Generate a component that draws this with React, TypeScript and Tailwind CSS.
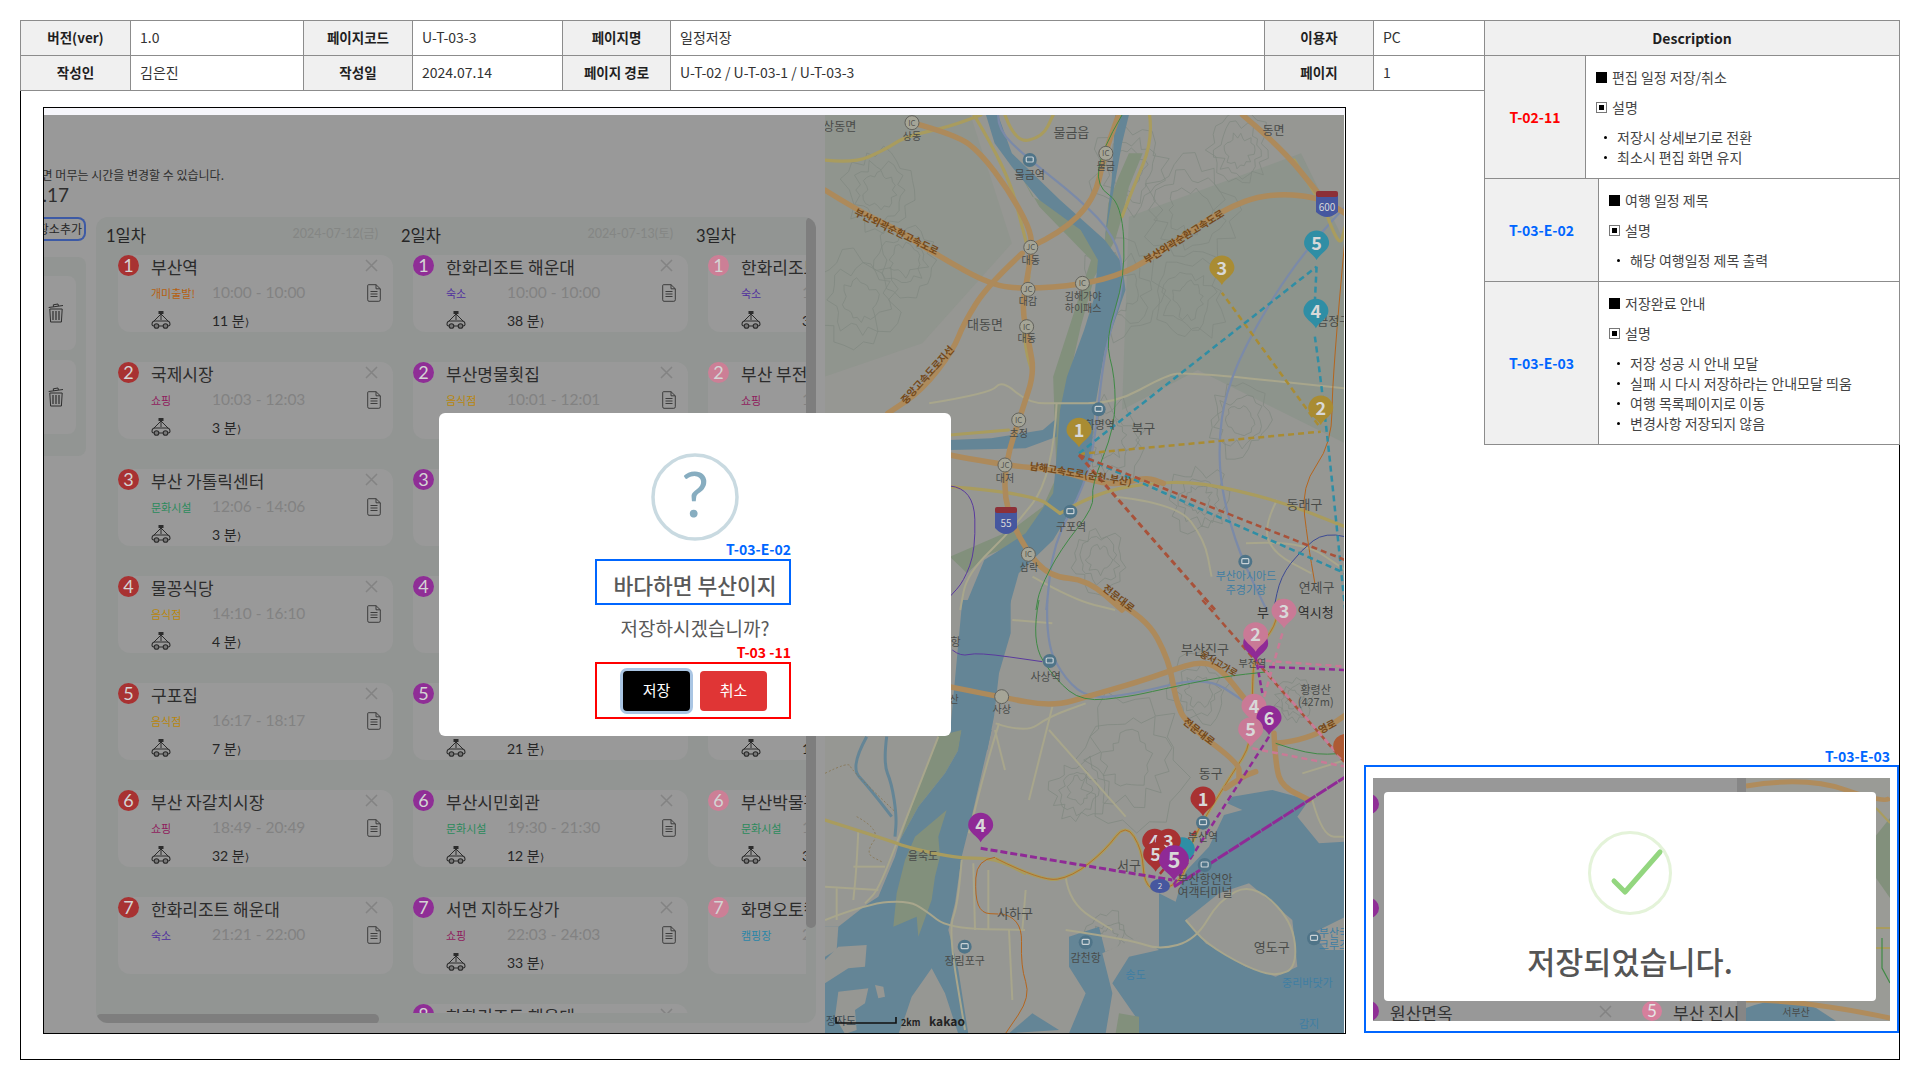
import React from "react";

// map helpers: the points were read off three crops of the reference
type Z = 6 | 7 | 8;
const pt = (z: Z, x: number, y: number): [number, number] =>
  z === 6 ? [820 + x / 2.904, 110 + y / 3] : z === 7 ? [900 + x / 3, 600 + y / 3] : [826 + x / 3, 730 + y / 3];

const parse = (z: Z, s: string) => {
  const n = s.trim().split(/[\s,]+/).map(Number);
  const out: [number, number][] = [];
  for (let i = 0; i < n.length; i += 2) out.push(pt(z, n[i], n[i + 1]));
  return out;
};

const smooth = (z: Z, s: string) => {
  const p = parse(z, s);
  let d = `M${p[0][0]} ${p[0][1]}`;
  for (let i = 1; i < p.length - 1; i++) {
    const mx = (p[i][0] + p[i + 1][0]) / 2;
    const my = (p[i][1] + p[i + 1][1]) / 2;
    d += ` Q${p[i][0]} ${p[i][1]} ${mx} ${my}`;
  }
  const l = p[p.length - 1];
  return d + ` L${l[0]} ${l[1]}`;
};

const poly = (z: Z, s: string) =>
  parse(z, s)
    .map((q, i) => `${i ? "L" : "M"}${q[0]} ${q[1]}`)
    .join(" ") + "Z";

const contourPaths = () => {
  const centres = [
    [880, 190, 34], [905, 260, 30], [860, 300, 40], [1130, 170, 36], [1190, 210, 44], [1240, 150, 30],
    [1120, 290, 40], [1190, 300, 34], [1240, 420, 30], [1110, 440, 36], [1200, 500, 28], [1100, 560, 26],
    [1130, 760, 54], [1080, 790, 26], [1200, 690, 30], [1270, 920, 32], [1110, 940, 22], [1295, 700, 18],
  ];
  let seed = 7;
  const rnd = () => ((seed = (seed * 16807) % 2147483647) % 1000) / 1000;
  const out: string[] = [];
  centres.forEach(([cx, cy, r]) => {
    [1, 0.72, 0.45].forEach((f) => {
      let d = "";
      for (let i = 0; i < 26; i++) {
        const a = (i / 26) * Math.PI * 2;
        const w = r * f * (0.72 + rnd() * 0.5);
        d += `${i ? "L" : "M"}${(cx + Math.cos(a) * w).toFixed(1)} ${(cy + Math.sin(a) * w * 1.15).toFixed(1)} `;
      }
      out.push(d + "Z");
    });
  });
  return out;
};

const motorways: [Z, string][] = [
  [6, "17 240 110 300 230 360 350 440 500 525 600 537 760 525 890 490 1000 420 1170 300 1300 250 1450 260 1528 310"],
  [6, "270 38 400 75 470 130 550 240 610 350 620 410 600 530 590 600 610 700 625 790 590 900 540 1060 540 1190 600 1320 670 1400 780 1410 880 1500"],
  [6, "615 410 700 370 800 270 830 130 870 15"],
  [6, "590 430 490 525 420 640 390 720 300 840 200 910"],
  [6, "380 1035 530 1065 700 1080 850 1130 950 1100 1000 1120"],
  [6, "1230 15 1340 110 1450 250"],
  [7, "640 0 740 50 810 180 830 300 860 370 1020 490 1020 530"],
  [7, "150 260 300 290 460 320 580 285 720 245 820 210 900 185 960 200 1040 300"],
  [7, "1125 400 1130 500 1150 560 1230 600"],
  [7, "1130 430 1230 420 1340 345"],
  [7, "980 565 1030 530 1070 515"],
];
const yellows: [Z, string][] = [
  [6, "17 150 100 160 190 120 250 80 380 50 470 15"],
  [6, "450 15 500 100 560 230 590 350 605 410"],
  [6, "610 500 590 600 600 720 620 790"],
  [6, "540 15 570 100 650 80 680 15"],
  [6, "960 15 970 90 910 240 880 320"],
  [6, "380 975 550 960"],
  [6, "380 1130 620 1150 700 1210"],
  [6, "700 1210 800 1150 950 1120 1100 1115 1330 1170 1528 1250"],
  [6, "1380 150 1440 250"],
  [6, "1470 300 1510 420 1528 350"],
  [8, "0 270 190 330 240 350 350 375 420 385 510 385 600 430"],
  [7, "290 775 430 845 520 830 620 750 680 670 730 750 735 850 780 880 860 830 870 730 1000 520 1060 430 1060 230 1070 150 1130 80 1140 0"],
];
const minors: [Z, string][] = [
  [6, "320 880 500 850 530 810 610 880 700 880 860 880 1000 800 1060 785 1528 835"],
  [6, "1330 1170 1290 1250 1320 1330 1430 1390"],
  [6, "1240 1300 1400 1290 1528 1380"],
  [6, "690 880 680 1100 560 1260 430 1390 410 1500"],
  [6, "860 1160 1040 1180 1120 1290 1140 1400"],
  [6, "620 1400 740 1470 860 1500"],
  [7, "450 390 680 650"],
  [7, "290 370 380 400 450 350 560 310"],
  [8, "0 570 130 520 250 512 300 540 370 595 600 600"],
  [8, "340 20 230 300 160 480 120 520"],
  [8, "100 300 95 410 85 510"],
  [8, "0 470 160 480"],
  [8, "85 410 180 410"],
  [8, "410 390 400 520 370 600 420 900"],
  [8, "35 475 35 570"],
  [8, "450 600 445 400"],
  [8, "490 600 490 420"],
  [8, "510 0 540 120"],
  [7, "500 990 700 1020 780 1050 890 1020 960 900 1060 850 1180 960 1195 1100 1130 1130 1040 1100 920 1030 860 960"],
  [7, "330 990 340 1200"],
  [7, "500 830 510 910 640 990"],
  [7, "380 870 370 990"],
  [7, "340 60 460 70"],
  [7, "300 370 260 500 210 700"],
  [7, "460 320 390 600"],
  [7, "1210 520 1340 480"],
  [7, "1240 600 1270 710 1340 710"],
];
const rails: [Z, string][] = [
  [6, "520 15 520 60 600 140 760 270 860 380 890 510 840 680 820 800 800 1000 770 1130 680 1300 660 1500"],
  [6, "1528 290 1400 430 1250 680 1180 850 1160 1000 1170 1150 1220 1330 1300 1500"],
  [7, "445 0 440 130 500 240 570 295 690 285 920 228 1030 300"],
];
const thinLines: [Z, string, string][] = [
  [6, "880 15 820 120 805 230 880 280 890 500 830 690 860 800 860 950 790 1130 800 1190 700 1320 640 1440 630 1500", "#3f8a45"],
  [6, "380 1128 450 1135 455 1320 420 1415 380 1460", "#5a3a9e"],
  [6, "1528 1280 1470 1265 1400 1320 1340 1400 1320 1500", "#3c4a94"],
  [6, "1528 380 1490 800 1490 1000 1400 1130 1420 1300 1440 1420", "#b5651d"],
  [7, "420 0 395 125 470 240 550 305 690 290 780 270 970 230 1110 215", "#3f8a45"],
  [7, "1130 430 1230 465 1340 460", "#3f8a45"],
  [7, "160 150 185 170 235 157 430 185", "#5a3a9e"],
  [8, "510 382 455 388 450 500 470 550 520 552", "#b5651d"],
  [7, "300 940 370 950 365 1100 395 1190 320 1300", "#b5651d"],
];
const routes: [Z, string, string, number, string][] = [
  [6, "755 1032 1457 965", "#a98c33", 2.5, "6 4"],
  [6, "1450 945 1170 548", "#a98c33", 2.5, "6 4"],
  [6, "755 1030 1445 470", "#2f8ea5", 2.5, "6 4"],
  [6, "1445 470 1440 575", "#2f8ea5", 2.5, "6 4"],
  [6, "1440 680 1465 860 1528 1500", "#2f8ea5", 2.5, "6 4"],
  [6, "755 1035 1528 1390", "#2f8ea5", 2.5, "6 4"],
  [6, "755 1035 1528 1350", "#a8523a", 2.5, "6 4"],
  [6, "755 1035 1150 1500", "#a8523a", 3, "6 4"],
  [7, "910 0 1340 490", "#a8523a", 2.5, "6 4"],
  [7, "1150 100 1095 290 1055 440", "#c97a96", 2.5, "6 4"],
  [7, "1070 180 1340 200", "#c97a96", 2.5, "6 4"],
  [7, "1080 190 1340 490", "#c97a96", 2.5, "6 4"],
  [7, "1060 445 1340 500", "#c97a96", 2.5, "6 4"],
  [7, "910 670 780 825", "#a83232", 2.5, "6 4"],
  [7, "1070 170 1090 280", "#8f2a96", 2.5, "5 3"],
  [7, "1080 200 1340 210", "#8f2a96", 2.5, "6 4"],
  [7, "1110 410 820 860", "#8f2a96", 2.5, "6 4"],
  [7, "245 745 820 840", "#8f2a96", 3, "7 3"],
  [7, "825 860 1340 530", "#8f2a96", 3, "12 1"],
];
const labels: [Z, number, number, string, number, string?][] = [
  [6, 60, 50, "상동면", 12], [6, 270, 78, "상동", 10], [6, 733, 65, "물금읍", 13], [6, 612, 195, "물금역", 11],
  [6, 833, 170, "물금", 10], [6, 1320, 60, "동면", 12], [6, 615, 452, "대동", 10], [6, 607, 575, "대감", 10],
  [6, 767, 560, "김해가야", 10], [6, 767, 595, "하이패스", 10], [6, 482, 643, "대동면", 13], [6, 603, 686, "대동", 10],
  [6, 580, 970, "초정", 10], [6, 540, 1105, "대저", 10], [6, 815, 945, "화명역", 11], [6, 942, 953, "북구", 13],
  [6, 732, 1250, "구포역", 11], [6, 610, 1372, "삼락", 10], [6, 1410, 1183, "동래구", 13], [6, 1495, 635, "금정구", 12],
  [6, 1445, 1430, "연제구", 13], [6, 1240, 1398, "부산아시아드", 11, "#3f7ea3"], [6, 1240, 1438, "주경기장", 11, "#3f7ea3"],
  [7, 918, 148, "부산진구", 13], [7, 1060, 190, "부전역", 10], [7, 1092, 35, "부", 13, "#2f2f2f"], [7, 1250, 35, "역시청", 13, "#2f2f2f"],
  [7, 1250, 268, "황령산", 11], [7, 1250, 305, "(427m)", 11], [7, 440, 230, "사상역", 11], [7, 308, 328, "사상", 10],
  [7, 935, 518, "동구", 13], [7, 690, 795, "서구", 13], [7, 912, 710, "부산역", 11], [7, 918, 838, "부산항연안", 12],
  [7, 918, 876, "여객터미널", 12], [7, 72, 768, "을숙도", 11], [7, 348, 940, "사하구", 13], [7, 197, 1083, "장림포구", 11],
  [7, 560, 1072, "감천항", 11], [7, 710, 1125, "송도", 11, "#3f7ea3"], [7, 1118, 1040, "영도구", 13], [7, 1305, 998, "부산국", 11, "#3f7ea3"],
  [7, 1305, 1035, "크루즈", 11, "#3f7ea3"], [7, 1225, 1147, "중리바닷가", 11, "#3f7ea3"], [7, 1230, 1272, "감지", 11, "#3f7ea3"],
  [7, 170, 125, "항", 11], [7, 165, 298, "산", 10],
];
const roadLabels: [Z, number, number, string, number, number][] = [
  [6, 225, 365, "부산외곽순환고속도로", 10, 26], [6, 1060, 380, "부산외곽순환고속도로", 10, -32],
  [6, 315, 795, "중앙고속도로지선", 10, -48], [6, 760, 1092, "남해고속도로(순천-부산)", 10, 9],
  [6, 870, 1465, "전문대로", 10, 38], [7, 900, 395, "전문대로", 10, 38], [7, 960, 190, "동서고가로", 9, 30], [7, 1285, 380, "영로", 10, -28],
];
const icSigns: [Z, number, number, string][] = [
  [6, 270, 38, "IC"], [6, 833, 130, "IC"], [6, 615, 412, "JC"], [6, 607, 538, "JC"], [6, 765, 520, "IC"],
  [6, 603, 650, "IC"], [6, 580, 930, "IC"], [6, 540, 1065, "JC"], [6, 608, 1333, "IC"], [7, 308, 290, ""],
];
const stations: [Z, number, number][] = [
  [6, 612, 150], [6, 812, 898], [6, 730, 1205], [6, 1238, 1355], [7, 452, 183], [7, 912, 668], [7, 917, 795],
  [7, 197, 1040], [7, 560, 1027], [7, 1245, 1015],
];
const pins: [Z, number, number, string, string, number?][] = [
  [6, 1170, 525, "#a98c33", "3"], [6, 1457, 945, "#a98c33", "2"], [6, 755, 1012, "#a98c33", "1"],
  [6, 1443, 655, "#2f8ea5", "4"], [6, 1445, 450, "#2f8ea5", "5"],
  [7, 850, 800, "#2f8ea5", ""],
  [7, 1070, 182, "#8f2a96", ""], [7, 1070, 155, "#c97a96", "2"], [7, 1155, 85, "#c97a96", "3"],
  [7, 1065, 370, "#c97a96", "4"], [7, 1110, 405, "#8f2a96", "6"], [7, 1055, 440, "#c97a96", "5"],
  [7, 1340, 490, "#ad5a34", ""],
  [7, 912, 648, "#a83232", "1"], [7, 767, 775, "#a83232", "4"], [7, 808, 775, "#a83232", "3"],
  [7, 770, 815, "#a83232", "5"], [7, 245, 727, "#8f2a96", "4"], [7, 825, 842, "#8f2a96", "5", 1.2],
];

function Pin({ z, x, y, color, n, scale = 1 }: { z: Z; x: number; y: number; color: string; n: string; scale?: number }) {
  const [px, py] = pt(z, x, y);
  return (
    <g transform={`translate(${px} ${py}) scale(${scale})`}>
      <path d="M0 0 C-3 -6 -12.5 -10 -12.5 -17 A12.5 12.5 0 1 1 12.5 -17 C12.5 -10 3 -6 0 0Z" fill={color} />
      <text x="0" y="-10.5" textAnchor="middle" fontSize="18" fontWeight="700" fill="#d8d8d8">
        {n}
      </text>
    </g>
  );
}

const land = "#969793";
const water = "#648596";
const marsh = "#82907c";

function MapView() {
  return (
    <svg viewBox="826 115 519 918" className="h-[918px] w-[519px] block shrink-0">
      <rect x="826" y="115" width="519" height="918" fill={land} />
      <path d={poly(6, "17 15 440 15 560 400 300 700 17 800")} fill="#90958e" />
      <path d={poly(6, "900 320 1400 130 1528 400 1528 1000 1100 780 880 900")} fill="#8d948c" />
      {contourPaths().map((d, i) => (
        <path key={i} d={d} fill="none" stroke="#828981" strokeWidth="0.8" />
      ))}
      <path d={poly(6, "545 120 620 260 700 300 830 395 840 280 870 200 900 130 940 130 900 230 880 320 860 390 800 500 760 650 710 880 700 1100 760 1100 730 1200 640 1270 480 1340 430 1390 380 1340 560 1260 650 1190 690 1100 680 800 790 450 640 290")} fill={marsh} />
      <path d={poly(6, "485 15 510 100 560 170 640 270 760 360 810 450 800 560 770 660 720 800 700 900 690 1040 680 1150 600 1270 480 1350 420 1500 550 1500 580 1390 680 1290 750 1170 790 1050 800 900 830 720 890 540 880 460 830 390 700 270 560 130 520 15")} fill={water} />
      <path d={poly(6, "860 15 900 15 880 100 840 330 830 390 850 210")} fill={water} />
      <path d={poly(6, "380 990 500 985 650 960 690 925 690 980 600 1015 380 1020")} fill={water} />
      <path d={poly(7, "190 0 335 0 335 100 300 220 285 350 265 450 140 450 153 400")} fill={water} />

      {/* lower Nakdong delta */}
      <path d={poly(8, "340 18 410 0 400 60 360 130 280 230 225 330 270 200")} fill={marsh} />
      <path d={poly(8, "410 0 500 0 470 130 440 260 410 380 390 520 370 600 400 720 430 912 0 912 0 590 40 590 130 520 160 500 210 380 225 330 280 230 360 130 400 60")} fill={water} />
      <path d={smooth(8, "125 20 75 110 130 170 200 260")} fill="none" stroke={water} strokeWidth="3" />
      <path d={smooth(8, "185 20 175 100 200 160 215 260 210 320")} fill="none" stroke={water} strokeWidth="3" />
      <path d={poly(8, "365 240 340 320 345 380 330 440 320 510 280 620 275 560 205 590 215 490 240 390 270 320")} fill={marsh} />
      <path d={poly(8, "0 590 40 590 35 660 0 680")} fill={land} />
      <path d={poly(8, "40 650 125 645 120 710 70 715 0 760 0 690")} fill={land} />
      <path d={poly(8, "40 785 130 775 120 820 90 840 95 900 60 912 30 860")} fill={land} />
      <path d={poly(8, "150 765 175 770 180 800 160 805")} fill={land} />
      <path d={poly(8, "320 715 360 790 400 912 220 912 240 860 260 800")} fill={land} />

      <path d={poly(7, "780 880 830 905 855 820 930 740 975 645 1030 630 985 610 1000 590 1120 570 1230 600 1195 650 1260 730 1340 725 1340 1300 510 1300 560 1180 510 1100 510 1010 600 980 620 1060 780 1040")} fill={water} />
      <path d={poly(7, "610 1060 720 1010 780 1050 690 1070 640 1150 710 1250 720 1300 620 1300 640 1180")} fill={land} />
      <path d={poly(7, "860 960 960 880 1050 850 1180 960 1195 1100 1130 1130 1040 1100 920 1030")} fill={land} />
      <path d={poly(7, "1240 1000 1340 950 1340 1050 1280 1050")} fill={land} />
      <path d={poly(7, "330 1300 400 1240 480 1290")} fill={water} />
      <path d={poly(7, "660 1240 720 1250 720 1300 650 1300")} fill={marsh} />

      <path d={smooth(8, "0 130 70 95 80 120 210 245")} fill="none" stroke="#86734f" strokeWidth="0.8" strokeDasharray="2 2" />
      <path d={smooth(8, "95 260 170 300 120 370 170 395")} fill="none" stroke="#86734f" strokeWidth="0.8" strokeDasharray="2 2" />
      {minors.map(([z, s], i) => (
        <path key={i} d={smooth(z, s)} fill="none" stroke="#a8a68c" strokeWidth="2" />
      ))}
      {rails.map(([z, s], i) => (
        <path key={i} d={smooth(z, s)} fill="none" stroke="#7b8aa8" strokeWidth="2.2" />
      ))}
      {yellows.map(([z, s], i) => (
        <path key={i} d={smooth(z, s)} fill="none" stroke="#a99c5e" strokeWidth="3.2" strokeLinecap="round" />
      ))}
      <path d={smooth(7, yellows[11][1])} fill="none" stroke="#b5651d" strokeWidth="0.8" />
      {motorways.map(([z, s], i) => (
        <path key={i} d={smooth(z, s)} fill="none" stroke="#ad8a5b" strokeWidth="5.5" strokeLinecap="round" />
      ))}
      {thinLines.map(([z, s, c], i) => (
        <path key={i} d={smooth(z, s)} fill="none" stroke={c} strokeWidth="1" />
      ))}
      {routes.map(([z, s, c, w, dash], i) => (
        <path key={i} d={smooth(z, s)} fill="none" stroke={c} strokeWidth={w} strokeDasharray={dash} />
      ))}

      {icSigns.map(([z, x, y, t], i) => {
        const [px, py] = pt(z, x, y);
        return (
          <g key={i}>
            <circle cx={px} cy={py} r="7" fill="#a5a597" stroke="#62625c" strokeWidth="1" />
            <text x={px} y={py + 3} textAnchor="middle" fontSize="8" fill="#55554f">
              {t}
            </text>
          </g>
        );
      })}
      {stations.map(([z, x, y], i) => {
        const [px, py] = pt(z, x, y);
        return (
          <g key={i}>
            <circle cx={px} cy={py} r="7" fill="#4f7488" />
            <rect x={px - 3.5} y={py - 3} width="7" height="5" rx="1" fill="none" stroke="#c9d2d6" strokeWidth="1.2" />
          </g>
        );
      })}
      {labels.map(([z, x, y, t, s, c], i) => {
        const [px, py] = pt(z, x, y);
        return (
          <text key={i} x={px} y={py + s * 0.38} textAnchor="middle" fontSize={s} fill={c || "#494b49"}>
            {t}
          </text>
        );
      })}
      {roadLabels.map(([z, x, y, t, s, r], i) => {
        const [px, py] = pt(z, x, y);
        return (
          <text key={i} x={px} y={py + 3.5} textAnchor="middle" fontSize={s} fontWeight="700" fill="#74491a" transform={`rotate(${r} ${px} ${py})`}>
            {t}
          </text>
        );
      })}

      <g>
        <path d="M1317 194 H1339 V212 Q1328 222 1317 212Z" fill="#46579f" />
        <rect x="1317" y="191" width="22" height="6" rx="2" fill="#8c3038" />
        <text x="1328" y="211" textAnchor="middle" fontSize="10" fill="#d8d8d8">600</text>
        <path d="M996 510 H1018 V528 Q1007 540 996 528Z" fill="#46579f" />
        <rect x="996" y="507" width="22" height="6" rx="2" fill="#8c3038" />
        <text x="1007" y="527" textAnchor="middle" fontSize="10" fill="#d8d8d8">55</text>
        <ellipse cx="1161" cy="886" rx="10" ry="7" fill="#46579f" />
        <text x="1161" y="889" textAnchor="middle" fontSize="8" fill="#d8d8d8">2</text>
      </g>
      {pins.map(([z, x, y, c, n, s], i) => (
        <Pin key={i} z={z} x={x} y={y} color={c} n={n} scale={s || 1} />
      ))}
      <text x="842" y="1025" textAnchor="middle" fontSize="11" fill="#3a4a54">정자도</text>
      <path d="M837 1017 V1023 H897 V1017" fill="none" stroke="#111" strokeWidth="1.6" />
      <text x="902" y="1026" fontSize="9" fontWeight="700" fill="#222">2km</text>
      <text x="930" y="1026" fontSize="12" fontWeight="700" fill="#222">kakao</text>
    </svg>
  );
}

function CarIcon() {
  return (
    <svg viewBox="0 0 20 18" className="w-5 h-[18px] text-[#2c2c2c]" fill="none" stroke="currentColor">
      <rect x="8" y="0.5" width="4" height="2" fill="currentColor" />
      <path d="M10 2.5 V9 M10 3 L3 10 M10 3 L17 10" strokeWidth="1" />
      <path d="M1 13.5 Q1 10 4 10 H16 Q19 10 19 13.5 Q19 15 17 15 H3 Q1 15 1 13.5Z" strokeWidth="1.1" />
      <circle cx="5.5" cy="15" r="2.3" fill="#777" strokeWidth="1.1" />
      <circle cx="14.5" cy="15" r="2.3" fill="#777" strokeWidth="1.1" />
    </svg>
  );
}

function DocIcon() {
  return (
    <svg viewBox="0 0 14 18" className="w-3.5 h-[18px] text-[#3d3d3d]" fill="none" stroke="currentColor" strokeWidth="1">
      <path d="M1.5 0.7 H9 L13.3 4.8 V15.8 Q13.3 17.3 11.8 17.3 H2 Q0.7 17.3 0.7 15.8 V1.5 Q0.7 0.7 1.5 0.7Z M9 0.7 V4.8 H13.3" />
      <path d="M3.5 7.5 H10.5 M3.5 10 H10.5 M3.5 12.5 H10.5" strokeWidth="1.1" />
    </svg>
  );
}

function CloseIcon() {
  return (
    <svg viewBox="0 0 13 13" className="w-[13px] h-[13px] text-[#838383]" fill="none" stroke="currentColor" strokeWidth="1.5">
      <path d="M1 1 L12 12 M12 1 L1 12" />
    </svg>
  );
}

function TrashIcon() {
  return (
    <svg viewBox="0 0 16 20" className="w-4 h-5 text-[#2f2f2f]" fill="none" stroke="currentColor" strokeWidth="1">
      <path d="M0.7 4.5 L15 2.5 M5.5 3.8 L5.3 1.8 L10 1 L10.4 3" />
      <path d="M1.8 6 H14.2 L13.4 19 H2.6Z" />
      <path d="M5 8 V17 M8 8 V17 M11 8 V17" strokeWidth="1.2" />
    </svg>
  );
}

type Item = { title: string; cat: string; catClass: string; time: string; travel?: string };

const stay = "text-[#4f2f9e]";
const food = "text-[#b8860b]";
const shop = "text-[#8f1e5e]";
const culture = "text-[#2b8a5c]";

const days: { name: string; date: string; badge: string; items: Item[] }[] = [
  {
    name: "1일차",
    date: "2024-07-12(금)",
    badge: "bg-[#a83232]",
    items: [
      { title: "부산역", cat: "개미출발!", catClass: "text-[#b5600f]", time: "10:00 - 10:00", travel: "11 분" },
      { title: "국제시장", cat: "쇼핑", catClass: shop, time: "10:03 - 12:03", travel: "3 분" },
      { title: "부산 가톨릭센터", cat: "문화시설", catClass: culture, time: "12:06 - 14:06", travel: "3 분" },
      { title: "물꽁식당", cat: "음식점", catClass: food, time: "14:10 - 16:10", travel: "4 분" },
      { title: "구포집", cat: "음식점", catClass: food, time: "16:17 - 18:17", travel: "7 분" },
      { title: "부산 자갈치시장", cat: "쇼핑", catClass: shop, time: "18:49 - 20:49", travel: "32 분" },
      { title: "한화리조트 해운대", cat: "숙소", catClass: stay, time: "21:21 - 22:00" },
    ],
  },
  {
    name: "2일차",
    date: "2024-07-13(토)",
    badge: "bg-[#8f2e96]",
    items: [
      { title: "한화리조트 해운대", cat: "숙소", catClass: stay, time: "10:00 - 10:00", travel: "38 분" },
      { title: "부산명물횟집", cat: "음식점", catClass: food, time: "10:01 - 12:01", travel: "" },
      { title: "", cat: "", catClass: food, time: "", travel: "" },
      { title: "", cat: "", catClass: food, time: "", travel: "" },
      { title: "", cat: "", catClass: food, time: "", travel: "21 분" },
      { title: "부산시민회관", cat: "문화시설", catClass: culture, time: "19:30 - 21:30", travel: "12 분" },
      { title: "서면 지하도상가", cat: "쇼핑", catClass: shop, time: "22:03 - 24:03", travel: "33 분" },
      { title: "한화리조트 해운대", cat: "숙소", catClass: stay, time: "" },
    ],
  },
  {
    name: "3일차",
    date: "",
    badge: "bg-[#cc7f96]",
    items: [
      { title: "한화리조트 해운대", cat: "숙소", catClass: stay, time: "10:00", travel: "38 분" },
      { title: "부산 부전시장", cat: "쇼핑", catClass: shop, time: "10:40", travel: "" },
      { title: "", cat: "", catClass: food, time: "", travel: "" },
      { title: "", cat: "", catClass: food, time: "", travel: "" },
      { title: "", cat: "", catClass: food, time: "", travel: "15 분" },
      { title: "부산박물관", cat: "문화시설", catClass: culture, time: "17:30", travel: "35 분" },
      { title: "화명오토캠핑장", cat: "캠핑장", catClass: "text-[#2b86a8]", time: "20:05" },
    ],
  },
];

function PlaceCard({ item, index, badge }: { item: Item; index: number; badge: string }) {
  return (
    <div className="w-[275px] h-[77px] shrink-0 rounded-xl bg-[#999999]">
      <div className="flex items-center h-[21px]">
        <div className={`w-[21px] h-[21px] rounded-full shrink-0 flex items-center justify-center text-[18px] text-[#d4d4d4] font-['Lato',sans-serif] ${badge}`}>
          {index + 1}
        </div>
        <div className="ml-3 text-[17px] leading-[21px] mt-0.5 text-[#2c2c2c] whitespace-nowrap">{item.title}</div>
        <div className="ml-auto mr-[15px]">
          <CloseIcon />
        </div>
      </div>
      <div className="flex items-center h-5 mt-[7px] pl-[33px]">
        <div className={`w-[61px] shrink-0 text-[11px] whitespace-nowrap ${item.catClass}`}>{item.cat}</div>
        <div className="text-[15.5px] text-[#828282] font-['Lato','Noto_Sans_CJK_KR',sans-serif] whitespace-nowrap">{item.time}</div>
        <div className="ml-auto mr-[12px]">
          <DocIcon />
        </div>
      </div>
      {item.travel !== undefined && (
        <div className="flex items-center h-[18px] mt-2 pl-[33px]">
          <div className="w-[61px] shrink-0">
            <CarIcon />
          </div>
          <div className="text-[14px] text-[#262626] whitespace-nowrap font-['Lato','Noto_Sans_CJK_KR',sans-serif]">
            {item.travel}
            <span className="text-[11px]">{item.travel ? "⟩" : ""}</span>
          </div>
        </div>
      )}
    </div>
  );
}

function Schedule() {
  return (
    <div className="w-[781px] h-[918px] shrink-0 bg-[#999999] flex flex-col">
      <div className="h-[102px] shrink-0 pt-[52px]">
        <div className="w-[180px] h-[16px] flex justify-end overflow-hidden whitespace-nowrap text-[12px] leading-4 text-[#2e2e2e]">
          화면 머무는 시간을 변경할 수 있습니다.
        </div>
        <div className="w-[25px] h-6 flex justify-end overflow-hidden whitespace-nowrap text-[19px] leading-6 text-[#2e2e2e] font-['Lato',sans-serif]">
          2024.07.17
        </div>
      </div>
      <div className="flex flex-1 min-h-0">
        <div className="w-[52px] shrink-0">
          <div className="w-[42px] h-6 rounded-r-lg border-2 border-l-0 border-[#3d5aa5] flex justify-end items-center overflow-hidden whitespace-nowrap text-[12px] text-[#262626] pr-0.5">
            장소추가
          </div>
          <div className="w-[42px] h-[199px] mt-4 rounded-r-lg bg-[#929593] pt-[19px] flex flex-col gap-2.5">
            {[0, 1].map((i) => (
              <div key={i} className="w-8 h-[74px] rounded-r-lg bg-[#999999] flex items-center pl-1">
                <TrashIcon />
              </div>
            ))}
          </div>
        </div>
        <div className="relative w-[720px] h-[806px] rounded-xl bg-[#929593] overflow-hidden">
          <div className="flex w-[710px] h-[796px] overflow-hidden">
            {days.map((day) => (
              <div key={day.name} className="w-[295px] shrink-0">
                <div className="h-[38px] pl-2.5 pr-[13px] flex justify-between items-center">
                  <span className="text-[16.5px] text-[#262626] font-['Lato','Noto_Sans_CJK_KR',sans-serif]">{day.name}</span>
                  <span className="text-[12.5px] text-[#848684] font-['Lato','Noto_Sans_CJK_KR',sans-serif] mb-1">{day.date}</span>
                </div>
                <div className="ml-[22px] flex flex-col gap-[30px]">
                  {day.items.map((item, i) => (
                    <PlaceCard key={i} item={item} index={i} badge={day.badge} />
                  ))}
                </div>
              </div>
            ))}
          </div>
          <div className="absolute right-0 top-0 w-2.5 h-[711px] rounded-full bg-[#7e7e7e]" />
          <div className="absolute left-0 top-[797px] w-[283px] h-2.5 rounded-full bg-[#7e7e7e]" />
        </div>
      </div>
    </div>
  );
}

function SaveModal() {
  return (
    <div className="absolute left-[395px] top-[305px] w-[512px] h-[323px] rounded-md bg-white flex flex-col items-center pt-10">
      <svg viewBox="0 0 88 88" className="w-[88px] h-[88px] shrink-0">
        <circle cx="44" cy="44" r="42" fill="none" stroke="#c9dae1" strokeWidth="3.5" />
        <text x="44" y="64" textAnchor="middle" fontSize="62" fill="#87adc0" fontFamily="Lato, sans-serif">
          ?
        </text>
      </svg>
      <div className="relative mt-[18px] mr-1 w-[196px] h-[46px] border-2 border-[#0066ff] flex items-center justify-center pl-1 pt-1.5 text-[21.5px] font-medium text-[#595959] whitespace-nowrap">
        바다하면 부산이지
        <span className="absolute -right-0.5 -top-[21px] text-[14px] leading-[18px] font-bold text-[#0066ff]">T-03-E-02</span>
      </div>
      <div className="mt-[11px] text-[19px] leading-6 text-[#595959] whitespace-nowrap">저장하시겠습니까?</div>
      <div className="relative mt-[22px] mr-1 w-[196px] h-[57px] border-2 border-[#ff0000] flex items-center pl-[26px] gap-2.5">
        <span className="absolute -right-0.5 -top-[21px] text-[14px] leading-[18px] font-bold text-[#ff0000]">T-03 -11</span>
        <div className="w-[67px] h-10 rounded bg-black ring-[3px] ring-[#a9c5e3] flex items-center justify-center text-[15px] text-white">저장</div>
        <div className="w-[67px] h-10 rounded bg-[#e03535] flex items-center justify-center text-[15px] text-white">취소</div>
      </div>
    </div>
  );
}

function SavedPreview() {
  return (
    <div className="relative self-end w-[535px] h-[268px] border-2 border-[#0066ff] pt-[11px] px-[7px]">
      <span className="absolute right-[7px] -top-[20px] text-[14px] leading-[18px] font-bold text-[#0066ff]">T-03-E-03</span>
      <div className="relative w-[517px] h-[243px] bg-[#989898] overflow-hidden">
        <div className="absolute right-0 top-0 w-[144px] h-full">
          <svg viewBox="0 0 144 243" className="w-full h-full block">
            <rect width="144" height="243" fill="#9a9b96" />
            <path d="M128 60 L144 40 V120 L130 100Z" fill="#82907c" />
            <path d="M0 230 Q40 215 70 230 L90 243 H0Z" fill="#648596" />
            <path d="M0 8 Q60 -2 100 12 T144 20" fill="none" stroke="#b08c5c" strokeWidth="5" />
            <path d="M0 222 Q60 222 144 240" fill="none" stroke="#b08c5c" strokeWidth="5" />
            <path d="M130 30 L144 45 M130 150 H144 M130 170 H144" stroke="#a99c5e" strokeWidth="2" />
            <path d="M136 160 V190 L144 205" fill="none" stroke="#3f8a45" strokeWidth="1.2" />
            <text x="50" y="238" fontSize="10" textAnchor="middle" fill="#494b49">서부산</text>
          </svg>
        </div>
        <div className="absolute right-[144px] top-0 w-[9px] h-full bg-[#868686]" />
        <div className="absolute -left-[14px] top-[16px] w-5 h-5 rounded-full bg-[#8f2e96]" />
        <div className="absolute -left-[14px] top-[120px] w-5 h-5 rounded-full bg-[#8f2e96]" />
        <div className="absolute -left-[14px] top-[223px] w-5 h-5 rounded-full bg-[#8f2e96]" />
        <div className="absolute left-[17px] top-[224px] text-[17px] leading-[22px] text-[#333333] whitespace-nowrap">원산면옥</div>
        <div className="absolute left-[226px] top-[227px] w-3 h-3 text-[#838383]">
          <CloseIcon />
        </div>
        <div className="absolute left-[269px] top-[223px] w-5 h-5 rounded-full bg-[#d67f9c] text-[#e6e6e6] flex items-center justify-center text-[17px] font-['Lato',sans-serif]">5</div>
        <div className="absolute left-[300px] top-[224px] text-[17px] leading-[22px] text-[#333333] whitespace-nowrap">부산 진시</div>
        <div className="absolute left-[11px] top-[14px] w-[492px] h-[209px] rounded bg-white flex flex-col items-center pt-[39px]">
          <svg viewBox="0 0 84 84" className="w-[84px] h-[84px] shrink-0">
            <circle cx="42" cy="42" r="40.5" fill="none" stroke="#e4f3d9" strokeWidth="3" />
            <path d="M26 51 L37 62 L72 22" transform="translate(0 -1)" fill="none" stroke="#93d67f" strokeWidth="5" strokeLinecap="round" strokeLinejoin="round" />
          </svg>
          <div className="mt-[28px] text-[30.5px] leading-9 font-medium text-[#555555] whitespace-nowrap">저장되었습니다.</div>
        </div>
      </div>
    </div>
  );
}

const metaHead = "h-[35px] pb-0.5 bg-[#f0f0f0] border-r border-b border-[#8c8c8c] flex items-center justify-center text-[13.5px] font-bold text-[#1f1f1f]";
const metaCell = "h-[35px] pb-0.5 border-r border-b border-[#8c8c8c] flex items-center pl-[9px] text-[14px] text-[#333333] whitespace-nowrap";
const metaLast = "h-[35px] pb-0.5 border-b border-[#8c8c8c] flex items-center pl-[9px] text-[14px] text-[#333333]";

function MetaTable() {
  return (
    <div className="grid grid-cols-[110px_173px_109px_150px_108px_594px_109px_110px] border-l border-t border-[#8c8c8c] shrink-0">
      <div className={metaHead}>버전(ver)</div>
      <div className={metaCell}>1.0</div>
      <div className={metaHead}>페이지코드</div>
      <div className={metaCell}>U-T-03-3</div>
      <div className={metaHead}>페이지명</div>
      <div className={metaCell}>일정저장</div>
      <div className={metaHead}>이용자</div>
      <div className={metaLast}>PC</div>
      <div className={metaHead}>작성인</div>
      <div className={metaCell}>김은진</div>
      <div className={metaHead}>작성일</div>
      <div className={metaCell}>2024.07.14</div>
      <div className={metaHead}>페이지 경로</div>
      <div className={metaCell}>U-T-02 / U-T-03-1 / U-T-03-3</div>
      <div className={metaHead}>페이지</div>
      <div className={metaLast}>1</div>
    </div>
  );
}

const descRows = [
  { code: "T-02-11", codeClass: "text-[#ff0000]", left: "w-[101px]", height: "h-[123px]", title: "편집 일정 저장/취소", lines: ["저장시 상세보기로 전환", "최소시 편집 화면 유지"] },
  { code: "T-03-E-02", codeClass: "text-[#0066ff]", left: "w-[114px]", height: "h-[103px]", title: "여행 일정 제목", lines: ["해당 여행일정 제목 출력"] },
  {
    code: "T-03-E-03",
    codeClass: "text-[#0066ff]",
    left: "w-[114px]",
    height: "h-[163px]",
    title: "저장완료 안내",
    lines: ["저장 성공 시 안내 모달", "실패 시 다시 저장하라는 안내모달 띄움", "여행 목록페이지로 이동", "변경사항 저장되지 않음"],
  },
];

function Description() {
  return (
    <div className="border-l border-t border-r border-[#8c8c8c] shrink-0">
      <div className="h-[35px] bg-[#f0f0f0] border-b border-[#8c8c8c] flex items-center justify-center text-[14px] font-bold text-[#1f1f1f]">
        Description
      </div>
      {descRows.map((row) => (
        <div key={row.code} className={`flex border-b border-[#8c8c8c] ${row.height}`}>
          <div className={`${row.left} shrink-0 bg-[#f0f0f0] border-r border-[#8c8c8c] flex items-center justify-center text-[14px] font-bold ${row.codeClass}`}>
            {row.code}
          </div>
          <div className="pl-[10px] pt-[11px] text-[14px] text-[#444444]">
            <div className="h-5 leading-5 flex items-center gap-[5px]">
              <span className="w-[11px] h-[11px] bg-black" />
              {row.title}
            </div>
            <div className="h-5 leading-5 mt-2.5 flex items-center gap-[5px]">
              <span className="w-[11px] h-[11px] border border-[#777777] flex items-center justify-center">
                <span className="w-[5px] h-[5px] bg-black" />
              </span>
              설명
            </div>
            <ul className="mt-2.5">
              {row.lines.map((line) => (
                <li key={line} className="h-5 leading-5 flex items-center whitespace-nowrap">
                  <span className="w-[3px] h-[3px] rounded-full bg-black ml-2 mr-[10px]" />
                  {line}
                </li>
              ))}
            </ul>
          </div>
        </div>
      ))}
    </div>
  );
}

export default function App() {
  return (
    <div className="w-[1920px] h-[1080px] bg-white pt-5 pl-5 overflow-hidden font-['Noto_Sans_CJK_KR','Noto_Sans',sans-serif]">
      <div className="flex w-[1880px] h-[1040px]">
        <div className="w-[1464px] shrink-0 flex flex-col">
          <MetaTable />
          <div className="flex-1 border-l border-b border-black pl-[22px] pt-4">
            <div className="relative w-[1303px] h-[927px] border border-black bg-white">
              <div className="h-[7px] bg-[#f6f6fb]" />
              <div className="flex">
                <Schedule />
                <MapView />
              </div>
              <SaveModal />
            </div>
          </div>
        </div>
        <div className="w-[416px] shrink-0 flex flex-col">
          <Description />
          <div className="flex-1 border-r border-b border-black flex flex-col justify-end pb-[26px]">
            <SavedPreview />
          </div>
        </div>
      </div>
    </div>
  );
}
